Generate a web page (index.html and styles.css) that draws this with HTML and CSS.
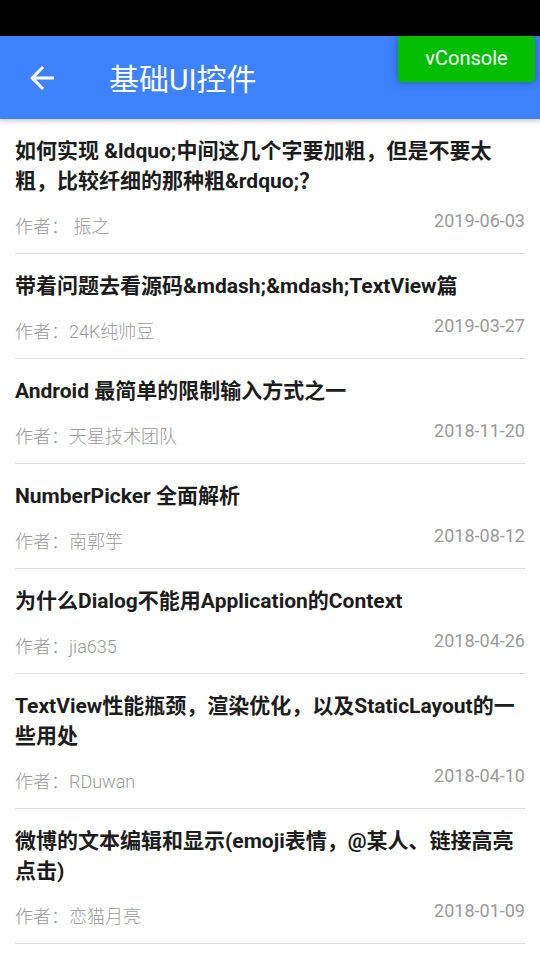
FILE: index.html
```html
<!DOCTYPE html>
<html lang="zh">
<head>
<meta charset="utf-8">
<title>基础UI控件</title>
<link rel="stylesheet" href="styles.css">
</head>
<body>
<div class="status"></div>
<header class="appbar">
  <svg class="back" viewBox="0 0 24 24" width="36" height="36"><path d="M20 11H7.83l5.59-5.59L12 4l-8 8 8 8 1.41-1.41L7.83 13H20v-2z" fill="#fff"/></svg>
  <h1 class="title">基础UI控件</h1>
</header>
<div class="vconsole">vConsole</div>
<ul class="list">
  <li class="item">
    <div class="item-title">如何实现 &amp;ldquo;中间这几个字要加粗，但是不要太<br>粗，比较纤细的那种粗&amp;rdquo;？</div>
    <div class="meta"><span class="author">作者： 振之</span><span class="date">2019-06-03</span></div>
  </li>
  <li class="item">
    <div class="item-title">带着问题去看源码&amp;mdash;&amp;mdash;TextView篇</div>
    <div class="meta"><span class="author">作者：24K纯帅豆</span><span class="date">2019-03-27</span></div>
  </li>
  <li class="item">
    <div class="item-title">Android 最简单的限制输入方式之一</div>
    <div class="meta"><span class="author">作者：天星技术团队</span><span class="date">2018-11-20</span></div>
  </li>
  <li class="item">
    <div class="item-title">NumberPicker 全面解析</div>
    <div class="meta"><span class="author">作者：南郭竽</span><span class="date">2018-08-12</span></div>
  </li>
  <li class="item">
    <div class="item-title">为什么Dialog不能用Application的Context</div>
    <div class="meta"><span class="author">作者：jia635</span><span class="date">2018-04-26</span></div>
  </li>
  <li class="item">
    <div class="item-title">TextView性能瓶颈，渲染优化，以及StaticLayout的一<br>些用处</div>
    <div class="meta"><span class="author">作者：RDuwan</span><span class="date">2018-04-10</span></div>
  </li>
  <li class="item">
    <div class="item-title">微博的文本编辑和显示(emoji表情，@某人、链接高亮<br>点击)</div>
    <div class="meta"><span class="author">作者：恋猫月亮</span><span class="date">2018-01-09</span></div>
  </li>
</ul>
</body>
</html>
```
FILE: styles.css
```css
* { box-sizing: border-box; }
html, body { margin: 0; padding: 0; }
body {
  width: 540px;
  height: 960px;
  overflow: hidden;
  background: #fff;
  font-family: Roboto, "Noto Sans CJK SC", sans-serif;
  position: relative;
}
.status {
  height: 36px;
  background: #000;
}
.appbar {
  height: 83px;
  background: #3d81fb;
  display: flex;
  align-items: center;
  padding-left: 24px;
  box-shadow: 0 2px 5px rgba(0,0,0,0.22);
  position: relative;
  z-index: 1;
}
.back { display: block; flex: none; margin-top: 1px; }
.title {
  margin: 0 0 0 49px;
  font-size: 30px;
  font-weight: normal;
  color: #fff;
  line-height: 36px;
  padding-top: 4px;
}
.vconsole {
  position: absolute;
  top: 36px;
  right: 5px;
  width: 137px;
  height: 46px;
  background: #04be02;
  color: #fff;
  font-size: 20px;
  line-height: 44px;
  text-align: center;
  border-radius: 4px;
  box-shadow: 0 0 8px rgba(0,0,0,0.35);
  z-index: 2;
}
.list {
  list-style: none;
  margin: 0;
  padding: 0 15px;
}
.item {
  padding: 17px 0 14px;
  border-bottom: 1px solid #dcdcdc;
}
.item-title {
  font-size: 21px;
  font-weight: bold;
  line-height: 30px;
  color: #1c1c1c;
  white-space: nowrap;
}
.meta {
  margin-top: 19px;
  display: flex;
  justify-content: space-between;
  align-items: flex-start;
}
.author {
  font-size: 18px;
  font-weight: 300;
  line-height: 24px;
  color: #9a9a9a;
}
.date {
  font-size: 18px;
  line-height: 12px;
  color: #9a9a9a;
}
```
